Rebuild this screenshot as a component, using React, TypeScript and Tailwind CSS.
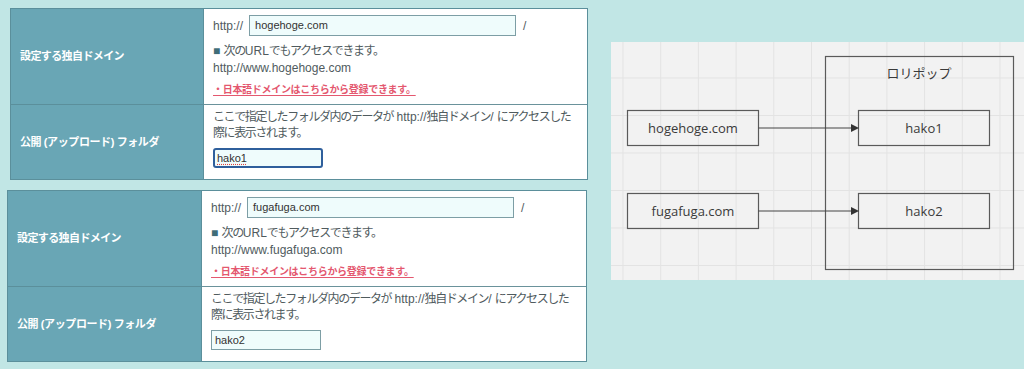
import React from "react";

const font = { fontFamily: '"Liberation Sans", "Noto Sans CJK JP", sans-serif' };

function J({ children }: { children: React.ReactNode }) {
  return <span className="tracking-[-1.4px]">{children}</span>;
}

function DomainTable({
  domain,
  folder,
  focused,
  className,
  leftW,
}: {
  domain: string;
  folder: string;
  focused: boolean;
  className: string;
  leftW: string;
}) {
  return (
    <div className={`flex border border-[#5b8f9b] bg-white ${className}`}>
      <div className={`${leftW} shrink-0 flex flex-col bg-[#69a6b5] border-r border-[#5b8f9b]`}>
        <div className="h-[95px] flex items-center pl-[9px] text-white font-bold text-[11px] tracking-[-0.6px]">
          設定する独自ドメイン
        </div>
        <div className="flex-1 flex items-center pl-[9px] text-white font-bold text-[11px] tracking-[-0.4px] border-t border-[#5b8f9b]">
          公開 (アップロード) フォルダ
        </div>
      </div>
      <div className="flex-1 flex flex-col text-[12px] text-[#505b5e] whitespace-nowrap">
        <div className="h-[95px] pl-[9px] pt-[6px]">
          <div className="flex items-center h-[21px]">
            <span>http://</span>
            <div className="ml-[6px] w-[267px] h-[21px] border border-[#7d9ea5] bg-[#effcfc] flex items-center pl-[5px] text-[11px] text-[#333]">
              {domain}
            </div>
            <span className="ml-[7px]">/</span>
          </div>
          <div className="mt-[7px] leading-[16px]">
            <span className="text-[#3f6d78]">■</span> <J>次の</J>URL<J>でもアクセスできます。</J>
          </div>
          <div className="leading-[16px] mt-[1px]">http://www.{domain}</div>
          <div className="mt-[6px] leading-[16px] text-[10px] font-bold text-[#e4586f] underline underline-offset-2 tracking-[-0.3px]">
            ・日本語ドメインはこちらから登録できます。
          </div>
        </div>
        <div className="flex-1 border-t border-[#6a929b] pl-[9px] pt-[4px] leading-[16px]">
          <div>
            <J>ここで指定したフォルダ内のデータが</J> http://<J>独自ドメイン</J>/ <J>にアクセスした</J>
          </div>
          <div>
            <J>際に表示されます。</J>
          </div>
          {focused ? (
            <div className="mt-[7px] w-[110px] h-[20px] border-2 border-[#2f5f9c] rounded-[3px] bg-[#effcfc] flex items-center pl-[2px] text-[11px] text-[#333]">
              <span className="underline decoration-dotted decoration-[#e04040] underline-offset-2">{folder}</span>
            </div>
          ) : (
            <div className="mt-[7px] w-[110px] h-[20px] border border-[#7d9ea5] bg-[#effcfc] flex items-center pl-[3px] text-[11px] text-[#333]">
              {folder}
            </div>
          )}
        </div>
      </div>
    </div>
  );
}

function Diagram() {
  const W = 413;
  const H = 238;
  const vlines: number[] = [];
  for (let x = 12; x < W; x += 37.7) vlines.push(x);
  const hlines: number[] = [];
  for (let y = -1.5; y < H; y += 37.5) hlines.push(y);
  return (
    <svg width={W} height={H} viewBox={`0 0 ${W} ${H}`} className="block">
      <rect x="0" y="0" width={W} height={H} fill="#f2f2f2" />
      {vlines.map((x) => (
        <line key={"v" + x} x1={x} y1="0" x2={x} y2={H} stroke="#e3e3e3" strokeWidth="1" />
      ))}
      {hlines.map((y) => (
        <line key={"h" + y} x1="0" y1={y} x2={W} y2={y} stroke="#e3e3e3" strokeWidth="1" />
      ))}
      <rect x="214.5" y="14.5" width="188" height="213" fill="none" stroke="#5a5a5a" strokeWidth="1.2" />
      <text x="308" y="36" textAnchor="middle" fontSize="13" fill="#3a3a3a" fontFamily='"Noto Sans CJK JP", sans-serif'>
        ロリポップ
      </text>
      {[
        { y: 68.5, l: "hogehoge.com", r: "hako1" },
        { y: 151.5, l: "fugafuga.com", r: "hako2" },
      ].map((b) => (
        <g key={b.l}>
          <rect x="16.5" y={b.y} width="131" height="35" fill="none" stroke="#5a5a5a" strokeWidth="1.2" />
          <text x="82" y={b.y + 22} textAnchor="middle" fontSize="13" fill="#3a3a3a" fontFamily='"Open Sans", sans-serif'>
            {b.l}
          </text>
          <rect x="247.5" y={b.y} width="131" height="35" fill="none" stroke="#5a5a5a" strokeWidth="1.2" />
          <text x="313" y={b.y + 22} textAnchor="middle" fontSize="13" fill="#3a3a3a" fontFamily='"Open Sans", sans-serif'>
            {b.r}
          </text>
          <line x1="147.5" y1={b.y + 17.5} x2="242" y2={b.y + 17.5} stroke="#444" strokeWidth="1.2" />
          <polygon points={`248,${b.y + 17.5} 240,${b.y + 13.5} 240,${b.y + 21.5}`} fill="#333" />
        </g>
      ))}
    </svg>
  );
}

export default function App() {
  return (
    <div className="w-[1024px] h-[369px] bg-[#c1e6e5] flex overflow-hidden" style={font}>
      <div className="flex flex-col">
        <DomainTable
          domain="hogehoge.com"
          folder="hako1"
          focused={true}
          className="mt-[8px] ml-[10px] w-[578px] h-[172px]"
          leftW="w-[193px]"
        />
        <DomainTable
          domain="fugafuga.com"
          folder="hako2"
          focused={false}
          className="mt-[10px] ml-[7px] w-[580px] h-[172px]"
          leftW="w-[194px]"
        />
      </div>
      <div className="ml-[23px] mt-[42px]">
        <Diagram />
      </div>
    </div>
  );
}
